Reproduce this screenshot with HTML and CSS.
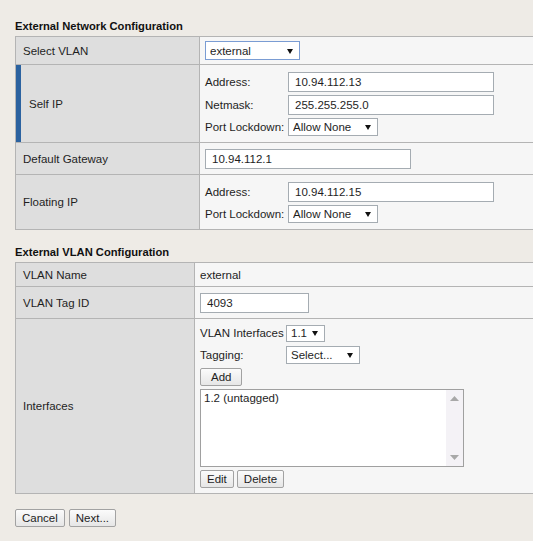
FILE: index.html
```html
<!DOCTYPE html>
<html lang="en">
<head>
    <meta charset="UTF-8">
    <title>Network Configuration</title>
    <link rel="stylesheet" href="styles.css">
</head>
<body>
<div class="page">
    <h2 class="section-title">External Network Configuration</h2>
    <table class="config-table net-table">
        <tr class="row-vlan">
            <td class="label-cell">Select VLAN</td>
            <td class="value-cell">
                <span class="select-wrap"><select class="form-select focused select-vlan"><option>external</option></select></span>
            </td>
        </tr>
        <tr class="row-self">
            <td class="label-cell label-active">Self IP</td>
            <td class="value-cell">
                <div class="field-grid">
                    <label class="field-label">Address:</label>
                    <input type="text" class="form-input" value="10.94.112.13">
                    <label class="field-label">Netmask:</label>
                    <input type="text" class="form-input" value="255.255.255.0">
                    <label class="field-label">Port Lockdown:</label>
                    <span class="select-wrap"><select class="form-select select-lock"><option>Allow None</option></select></span>
                </div>
            </td>
        </tr>
        <tr class="row-gateway">
            <td class="label-cell">Default Gateway</td>
            <td class="value-cell">
                <input type="text" class="form-input input-gateway" value="10.94.112.1">
            </td>
        </tr>
        <tr class="row-float">
            <td class="label-cell">Floating IP</td>
            <td class="value-cell">
                <div class="field-grid">
                    <label class="field-label">Address:</label>
                    <input type="text" class="form-input" value="10.94.112.15">
                    <label class="field-label">Port Lockdown:</label>
                    <span class="select-wrap"><select class="form-select select-lock"><option>Allow None</option></select></span>
                </div>
            </td>
        </tr>
    </table>

    <h2 class="section-title second">External VLAN Configuration</h2>
    <table class="config-table vlan-table">
        <tr class="row-name">
            <td class="label-cell">VLAN Name</td>
            <td class="value-cell">external</td>
        </tr>
        <tr class="row-tag">
            <td class="label-cell">VLAN Tag ID</td>
            <td class="value-cell">
                <input type="text" class="form-input input-tag" value="4093">
            </td>
        </tr>
        <tr class="row-ifaces">
            <td class="label-cell">Interfaces</td>
            <td class="value-cell">
                <div class="iface-grid">
                    <label class="field-label">VLAN Interfaces</label>
                    <span class="select-wrap"><select class="form-select select-iface"><option>1.1</option></select></span>
                    <label class="field-label">Tagging:</label>
                    <span class="select-wrap"><select class="form-select select-tagging"><option>Select...</option></select></span>
                </div>
                <button type="button" class="btn btn-add">Add</button>
                <div class="listbox">
                    <div class="list-items">
                        <div class="list-item">1.2 (untagged)</div>
                    </div>
                    <div class="list-scroll">
                        <svg width="9" height="5" viewBox="0 0 9 5"><path d="M0 5 L4.5 0 L9 5 Z" fill="#a8a8a8"/></svg>
                        <svg width="9" height="5" viewBox="0 0 9 5"><path d="M0 0 L4.5 5 L9 0 Z" fill="#a8a8a8"/></svg>
                    </div>
                </div>
                <div class="btn-row">
                    <button type="button" class="btn">Edit</button>
                    <button type="button" class="btn">Delete</button>
                </div>
            </td>
        </tr>
    </table>

    <div class="form-actions">
        <button type="button" class="btn">Cancel</button>
        <button type="button" class="btn">Next...</button>
    </div>
</div>
</body>
</html>
```

FILE: styles.css
```css
:root {
    --page: #eeebe6;
    --label-bg: #dedede;
    --value-bg: #f6f6f6;
    --line: #b4b4b4;
    --field-line: #a5acb2;
    --accent: #2b62a0;
    --text: #1e1e1e;
}
* {
    box-sizing: border-box;
}
html, body {
    margin: 0;
    overflow: hidden;
}
body {
    background: var(--page);
    color: var(--text);
    font-family: "Liberation Sans", Arial, sans-serif;
    font-size: 11.5px;
}
.page {
    padding: 19px 0 0 15px;
}
.section-title {
    margin: 0 0 3px;
    font-size: 11.2px;
    line-height: 14px;
    font-weight: bold;
    color: #111;
}
.section-title.second {
    margin-top: 15px;
}
.config-table {
    width: 530px;
    border-collapse: collapse;
    border: 1px solid var(--line);
}
.config-table td {
    border: 1px solid var(--line);
    padding: 0;
    vertical-align: middle;
}
.label-cell {
    background: var(--label-bg);
    padding-left: 7px !important;
}
.net-table .label-cell {
    width: 184px;
}
.vlan-table .label-cell {
    width: 179px;
}
.label-active {
    box-shadow: inset 5px 0 0 var(--accent);
    padding-left: 13px !important;
}
.value-cell {
    background: var(--value-bg);
    padding-left: 5px !important;
}
.row-vlan td { height: 28px; }
.row-self td { height: 78px; }
.row-gateway td { height: 32px; }
.row-float td { height: 55px; }
.row-name td { height: 24px; }
.row-tag td { height: 32px; }
.row-ifaces td { height: 175px; }

.field-grid {
    display: grid;
    grid-template-columns: 83px auto;
    row-gap: 3px;
    align-items: center;
    justify-items: start;
}
.field-label {
    white-space: nowrap;
}
.form-input {
    width: 206px;
    height: 20px;
    border: 1px solid var(--field-line);
    background: #fff;
    padding: 0 6px;
    font: inherit;
    color: var(--text);
}
.input-gateway {
    width: 206px;
}
.input-tag {
    width: 109px;
}
.select-wrap {
    position: relative;
    display: inline-block;
}
.select-wrap::after {
    content: "";
    position: absolute;
    right: 7px;
    top: 50%;
    margin-top: -2px;
    border-left: 3.5px solid transparent;
    border-right: 3.5px solid transparent;
    border-top: 5px solid #111;
    pointer-events: none;
}
.form-select {
    -webkit-appearance: none;
    appearance: none;
    height: 18px;
    border: 1px solid var(--field-line);
    border-radius: 0;
    background: #fff;
    padding: 0 0 0 4px;
    font: inherit;
    color: var(--text);
    display: block;
}
.form-select.focused {
    border-color: #7a9cd3;
    height: 19px;
}
.select-vlan {
    width: 95px;
}
.select-lock {
    width: 90px;
}
.select-iface {
    width: 39px;
    height: 17px;
}
.select-tagging {
    width: 74px;
}
.iface-grid {
    display: grid;
    grid-template-columns: 86px auto;
    row-gap: 4px;
    align-items: center;
    justify-items: start;
}
.btn {
    height: 18px;
    padding: 0 6px;
    border: 1px solid #a2a2a2;
    border-radius: 2px;
    background: linear-gradient(#fbfbfb, #e6e6e6);
    font: inherit;
    color: var(--text);
}
.btn-add {
    margin-top: 4px;
    padding: 0 10px;
}
.listbox {
    display: flex;
    width: 264px;
    height: 78px;
    margin-top: 3px;
    border: 1px solid #a0a0a0;
    background: #fff;
}
.list-items {
    flex: 1;
    padding: 2px 3px;
}
.list-scroll {
    width: 17px;
    background: #f4f2f6;
    display: flex;
    flex-direction: column;
    justify-content: space-between;
    align-items: center;
    padding: 6px 0 6px;
}
.btn-row {
    display: flex;
    gap: 3px;
    margin-top: 3px;
}
.form-actions {
    display: flex;
    gap: 4px;
    margin-top: 15px;
}
```
